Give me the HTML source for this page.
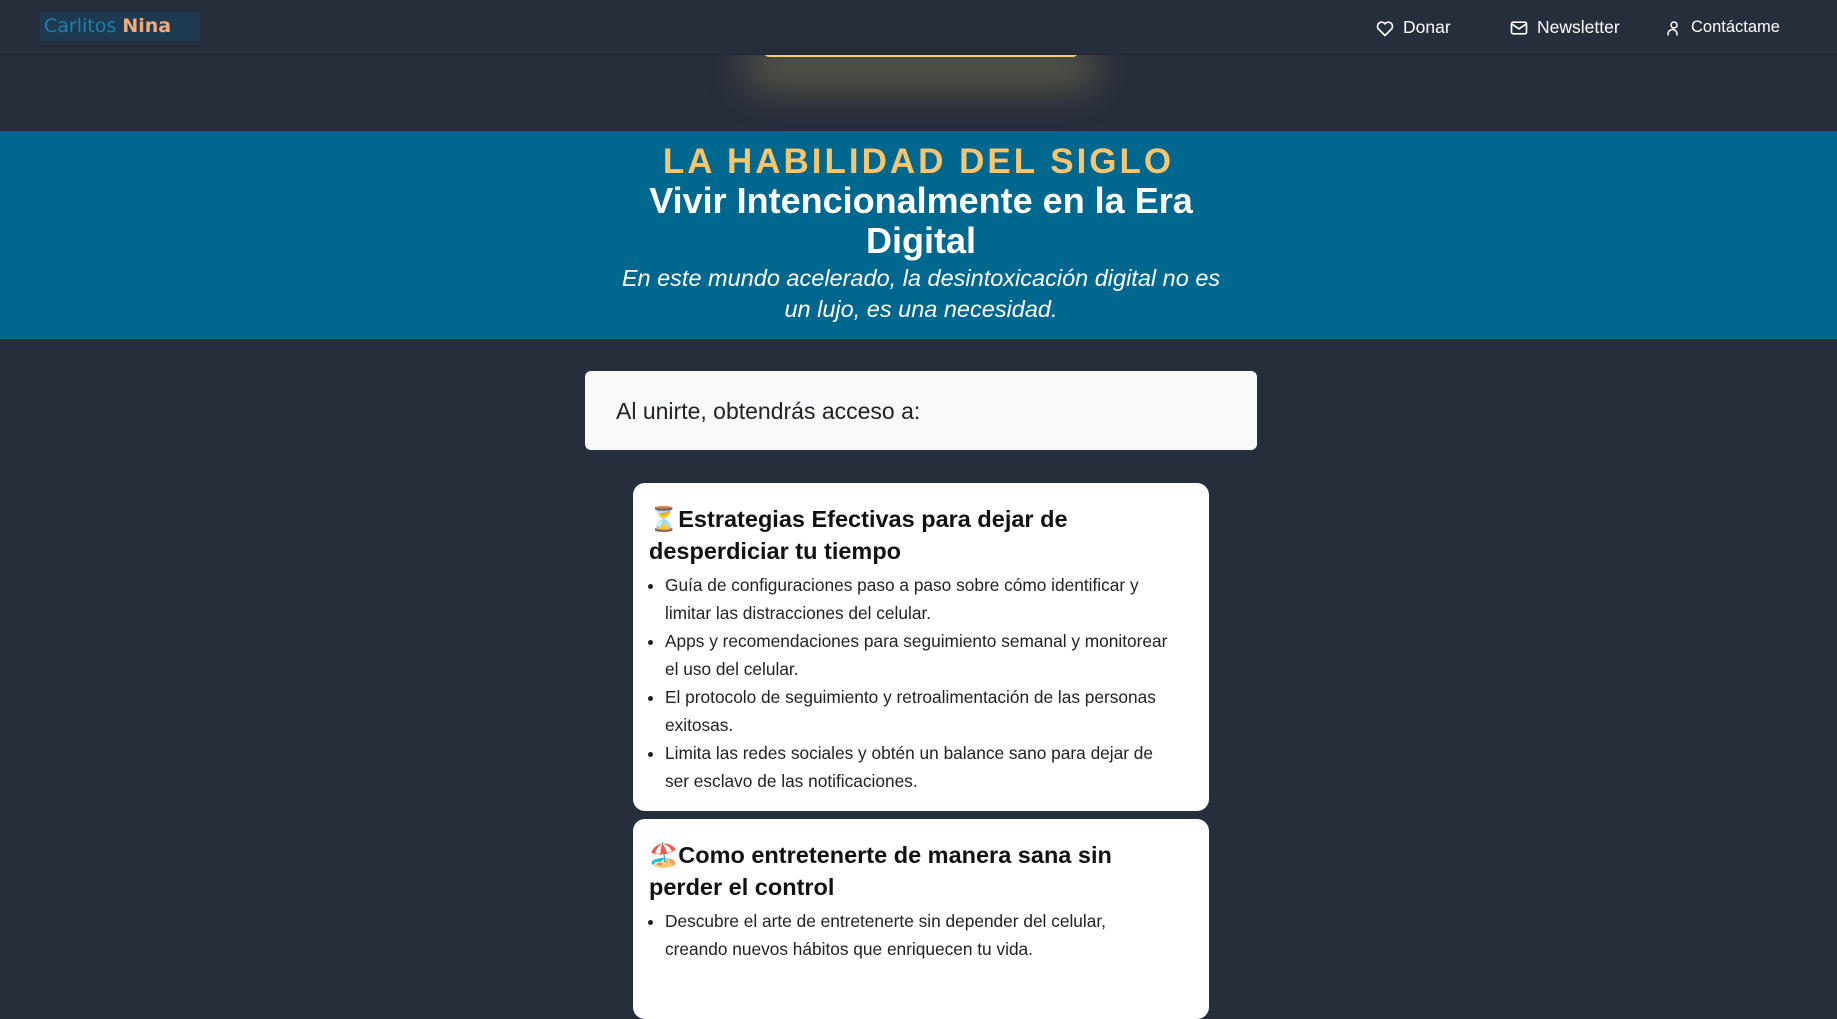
<!DOCTYPE html>
<html><head><meta charset="utf-8"><style>
*{box-sizing:border-box;margin:0;padding:0}
body{width:1837px;height:958px;overflow:hidden;background:#262d3b;font-family:"Liberation Sans",Arial,sans-serif;position:relative}
.hdr{position:absolute;left:0;top:0;width:1837px;height:55px;background:#262d3b;border-bottom:1px solid #20262f;z-index:3}
.logo{position:absolute;left:40px;top:12px;width:160px;height:29px;background:#1d3a50;font-family:"DejaVu Sans",sans-serif;font-size:19px;line-height:29px;padding-left:4px}
.nav{position:absolute;top:0;height:55px;display:flex;align-items:center;color:#fff;font-size:17.5px}
.nav svg{margin-right:8px}
.glow{position:absolute;left:764px;top:52px;width:314px;height:5px;background:#f8cf78;border-radius:0 0 8px 8px;box-shadow:0 12px 40px 18px rgba(200,180,100,.35);z-index:2}
.band{position:absolute;left:0;top:131px;width:1837px;height:208px;background:#00678f}
.t1{position:absolute;top:142px;left:0;width:1837px;text-align:center;font-size:35px;font-weight:bold;letter-spacing:3px;color:#f5c56f}
.t2{position:absolute;top:181px;left:620px;width:602px;text-align:center;font-size:36px;font-weight:bold;line-height:40px;color:#fff}
.t3{position:absolute;top:263px;left:610px;width:622px;text-align:center;font-size:23.5px;font-style:italic;line-height:31px;color:#fff}
.box{position:absolute;left:585px;top:371px;width:672px;height:79px;background:#f8f9fa;border-radius:6px;font-size:23px;color:#222;padding-left:31px;line-height:80px}
.card{position:absolute;left:633px;width:576px;background:#fff;border-radius:12px;padding:20px 30px 0 16px;color:#111}
.card h3{font-size:23.5px;line-height:32px;font-weight:bold;padding-right:36px}
.card ul{margin-top:4px;padding-left:16px;font-size:17.3px;line-height:28px;color:#222}
</style></head><body>
<div class="hdr">
<div class="logo"><span style="color:#1a7fae">Carlitos</span> <span style="color:#f4a97a;font-weight:bold">Nina</span></div>
<div class="nav" style="left:1375px"><svg width="20" height="20" viewBox="0 0 24 24" fill="none" stroke="#fff" stroke-width="2"><path d="M12 21l-8-8a5 5 0 017-7l1 1 1-1a5 5 0 017 7z"/></svg>Donar</div>
<div class="nav" style="left:1509px"><svg width="20" height="20" viewBox="0 0 24 24" fill="none" stroke="#fff" stroke-width="2"><rect x="3" y="5" width="18" height="14" rx="2"/><path d="M3 7l9 6 9-6"/></svg>Newsletter</div>
<div class="nav" style="left:1665px;font-size:16.5px"><svg width="18" height="20" viewBox="0 0 24 24" fill="none" stroke="#fff" stroke-width="2"><circle cx="12" cy="8" r="4"/><path d="M4 22v-2a6 6 0 0112 0v2"/></svg>Contáctame</div>
</div>
<div class="glow"></div>
<div class="band"></div>
<div class="t1">LA HABILIDAD DEL SIGLO</div>
<div class="t2">Vivir Intencionalmente en la Era Digital</div>
<div class="t3">En este mundo acelerado, la desintoxicación digital no es un lujo, es una necesidad.</div>
<div class="box">Al unirte, obtendrás acceso a:</div>
<div class="card" style="top:483px;height:328px">
<h3>⏳Estrategias Efectivas para dejar de desperdiciar tu tiempo</h3>
<ul><li>Guía de configuraciones paso a paso sobre cómo identificar y limitar las distracciones del celular.</li>
<li>Apps y recomendaciones para seguimiento semanal y monitorear<br>el uso del celular.</li>
<li>El protocolo de seguimiento y retroalimentación de las personas exitosas.</li>
<li>Limita las redes sociales y obtén un balance sano para dejar de<br>ser esclavo de las notificaciones.</li></ul>
</div>
<div class="card" style="top:819px;height:200px">
<h3>🏖️Como entretenerte de manera sana sin perder el control</h3>
<ul><li>Descubre el arte de entretenerte sin depender del celular,<br>creando nuevos hábitos que enriquecen tu vida.</li></ul>
</div>
</body></html>
